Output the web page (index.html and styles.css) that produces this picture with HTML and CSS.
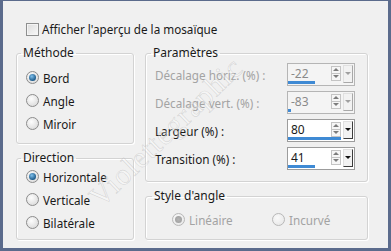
FILE: index.html
```html
<!DOCTYPE html>
<html lang="fr">
<head>
    <meta charset="UTF-8">
    <title>Mosaïque</title>
    <link rel="stylesheet" href="styles.css">
</head>
<body>
    <div class="dialog">
        <div class="check-row">
            <span class="checkbox"></span>
            <span>Afficher l'aperçu de la mosaïque</span>
        </div>

        <div class="columns">
            <div class="col col-left">
                <fieldset class="group group-method">
                    <legend>Méthode</legend>
                    <div class="radio-row"><span class="radio checked"></span>Bord</div>
                    <div class="radio-row"><span class="radio"></span>Angle</div>
                    <div class="radio-row"><span class="radio"></span>Miroir</div>
                </fieldset>

                <fieldset class="group group-direction">
                    <legend>Direction</legend>
                    <div class="radio-row"><span class="radio checked"></span>Horizontale</div>
                    <div class="radio-row"><span class="radio"></span>Verticale</div>
                    <div class="radio-row"><span class="radio"></span>Bilatérale</div>
                </fieldset>
            </div>

            <div class="col col-right">
                <fieldset class="group group-params">
                    <legend>Paramètres</legend>
                    <div class="param-row disabled">
                        <span class="param-label">Décalage horiz. (%) :</span>
                        <div class="spin">
                            <div class="spin-main">
                                <div class="spin-top">
                                    <span class="spin-value">-22</span>
                                    <span class="arrows"><span class="arr up"></span><span class="arr down"></span></span>
                                </div>
                                <div class="bar" style="width: 27px"></div>
                            </div>
                            <span class="drop"></span>
                        </div>
                    </div>
                    <div class="param-row disabled">
                        <span class="param-label">Décalage vert. (%) :</span>
                        <div class="spin">
                            <div class="spin-main">
                                <div class="spin-top">
                                    <span class="spin-value">-83</span>
                                    <span class="arrows"><span class="arr up"></span><span class="arr down"></span></span>
                                </div>
                                <div class="bar" style="width: 3px"></div>
                            </div>
                            <span class="drop"></span>
                        </div>
                    </div>
                    <div class="param-row">
                        <span class="param-label">Largeur (%) :</span>
                        <div class="spin">
                            <div class="spin-main">
                                <div class="spin-top">
                                    <span class="spin-value">80</span>
                                    <span class="arrows"><span class="arr up"></span><span class="arr down"></span></span>
                                </div>
                                <div class="bar" style="width: 53px"></div>
                            </div>
                            <span class="drop"></span>
                        </div>
                    </div>
                    <div class="param-row">
                        <span class="param-label">Transition (%) :</span>
                        <div class="spin">
                            <div class="spin-main">
                                <div class="spin-top">
                                    <span class="spin-value">41</span>
                                    <span class="arrows"><span class="arr up"></span><span class="arr down"></span></span>
                                </div>
                                <div class="bar" style="width: 27px"></div>
                            </div>
                            <span class="drop"></span>
                        </div>
                    </div>
                </fieldset>

                <fieldset class="group group-style">
                    <legend>Style d'angle</legend>
                    <div class="style-row">
                        <div class="radio-row disabled lin"><span class="radio checked"></span>Linéaire</div>
                        <div class="radio-row disabled inc"><span class="radio"></span>Incurvé</div>
                    </div>
                </fieldset>
            </div>
        </div>

        <div class="watermark">Violettegraphic</div>
    </div>
</body>
</html>
```

FILE: styles.css
```css
:root {
    --frame: #5b6b8c;
    --panel: #f0f0f0;
    --group-border: #d3d3d3;
    --text: #1a1a1a;
    --disabled: #a3a3a3;
    --bar: #3f8ad4;
}

html, body {
    margin: 0;
    height: 100%;
}

body {
    background: var(--frame);
    font-family: 'Noto Sans', 'Open Sans', sans-serif;
    font-size: 11.7px;
    color: var(--text);
    overflow: hidden;
}

.dialog {
    position: relative;
    margin: 1px 3px 0 3px;
    height: 247px;
    background: var(--panel);
    overflow: hidden;
}

.check-row {
    display: flex;
    align-items: center;
    gap: 3px;
    padding: 20px 0 0 23px;
    height: 16px;
}

.checkbox {
    width: 11px;
    height: 11px;
    border: 1px solid #8e8f8f;
    background: linear-gradient(135deg, #dcdcdc, #f8f8f8);
    box-shadow: inset 0 0 0 1px #f4f4f4;
}

.columns {
    display: flex;
    gap: 11px;
    padding: 9px 0 0 13px;
}

.col {
    display: flex;
    flex-direction: column;
}

.col-left {
    width: 118px;
    gap: 7px;
}

.col-right {
    width: 223px;
    gap: 7px;
}

.group {
    box-sizing: border-box;
    margin: 0;
    padding: 0;
    border: 1px solid var(--group-border);
    border-radius: 3px;
    box-shadow: 1px 1px 0 #fff, inset 1px 1px 0 #fff;
    min-width: 0;
}

.group legend {
    margin-left: 4px;
    padding: 0 2px;
    line-height: 14px;
    height: 14px;
    font-size: 12px;
}

.group-method {
    height: 98px;
    padding: 6px 0 0 9px;
}

.group-method legend,
.group-direction legend {
    margin-left: -5px;
}

.group-direction {
    height: 89px;
    padding: 0 0 0 9px;
}

.radio-row {
    display: flex;
    align-items: center;
    gap: 4px;
    height: 23px;
}

.radio {
    width: 11px;
    height: 11px;
    border-radius: 50%;
    border: 1px solid #8c8c8c;
    background: radial-gradient(circle at 40% 35%, #fdfdfd, #d4d4d4);
    position: relative;
}

.radio.checked::after {
    content: "";
    position: absolute;
    left: 2px;
    top: 2px;
    width: 7px;
    height: 7px;
    border-radius: 50%;
    background: radial-gradient(circle at 40% 35%, #7fc0ec, #1c5a8a 70%);
}

.group-params {
    height: 136px;
    padding: 3px 0 0 9px;
}

.group-params legend {
    margin-left: -4px;
}

.param-row {
    display: flex;
    align-items: center;
    justify-content: space-between;
    height: 23px;
    margin-bottom: 5px;
    padding-right: 12px;
}

.param-row.disabled .param-label {
    color: var(--disabled);
}

.spin {
    box-sizing: border-box;
    display: flex;
    width: 68px;
    height: 23px;
    border: 1px solid #9c9c9c;
    background: #fff;
}

.param-row.disabled .spin {
    border-color: #b5b5b5;
    background: #f4f4f4;
}

.spin-main {
    flex: 1;
    display: flex;
    flex-direction: column;
    justify-content: space-between;
}

.spin-top {
    display: flex;
    align-items: flex-start;
    justify-content: space-between;
    padding: 2px 1px 0 3px;
}

.spin-value {
    line-height: 15px;
    font-size: 12px;
}

.param-row.disabled .spin-value {
    color: #8a8a8a;
}

.arrows {
    display: flex;
    flex-direction: column;
    width: 8px;
    border: 1px solid #c4c4c4;
    background: #f6f6f6;
}

.arr {
    height: 6px;
    position: relative;
}

.arr.up {
    border-bottom: 1px solid #c4c4c4;
}

.arr::after {
    content: "";
    position: absolute;
    left: 1px;
    top: 1px;
    border-left: 3px solid transparent;
    border-right: 3px solid transparent;
}

.arr.up::after {
    border-bottom: 3px solid #7c7c7c;
}

.arr.down::after {
    border-top: 3px solid #7c7c7c;
}

.bar {
    height: 3px;
    background: var(--bar);
    margin-bottom: 1px;
}

.drop {
    width: 8px;
    margin: 1px 1px 2px 1px;
    background: #f2f2f2;
    border: 1px solid #e0e0e0;
    border-right-color: #3c3c3c;
    border-bottom-color: #3c3c3c;
    position: relative;
}

.drop::after {
    content: "";
    position: absolute;
    left: 1px;
    top: 6px;
    border-left: 3px solid transparent;
    border-right: 3px solid transparent;
    border-top: 3px solid #111;
}

.param-row.disabled .drop {
    border-right-color: #a8a8a8;
    border-bottom-color: #a8a8a8;
}

.param-row.disabled .drop::after {
    border-top-color: #a0a0a0;
}

.group-style {
    height: 51px;
    padding: 5px 0 0 26px;
}

.group-style legend {
    margin-left: -20px;
}

.style-row {
    display: flex;
}

.radio-row.disabled {
    color: var(--disabled);
}

.radio-row.disabled .radio {
    border-color: #b8b8b8;
    background: radial-gradient(circle at 40% 35%, #fafafa, #e4e4e4);
}

.radio-row.disabled .radio.checked::after {
    background: radial-gradient(circle, #b4b4b4, #9c9c9c);
}

.lin {
    width: 100px;
}

.watermark {
    position: absolute;
    left: 163px;
    top: 131px;
    transform: translate(-50%, -50%) rotate(-44deg);
    font-family: 'Liberation Serif', serif;
    font-size: 30px;
    letter-spacing: 1px;
    color: rgba(255, 255, 255, 0.35);
    -webkit-text-stroke: 0.6px rgba(150, 150, 150, 0.32);
    white-space: nowrap;
    pointer-events: none;
}
```
